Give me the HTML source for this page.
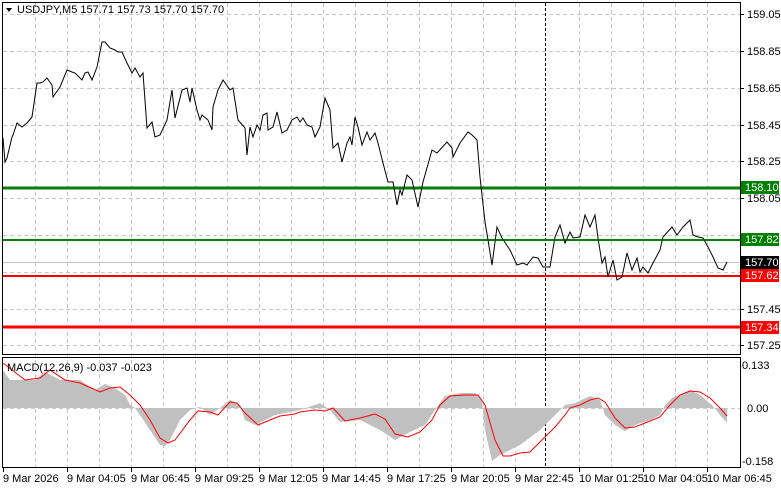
<!DOCTYPE html>
<html><head><style>
body{margin:0;width:781px;height:489px;background:#fff;overflow:hidden;font-family:"Liberation Sans",sans-serif;}
svg text{font-family:"Liberation Sans",sans-serif;font-size:11px;}
</style></head><body>
<svg width="781" height="489" xmlns="http://www.w3.org/2000/svg">
<g stroke="#c8c8c8" stroke-dasharray="4,3" stroke-width="1">
<line x1="35.5" y1="3" x2="35.5" y2="467"/><line x1="67.5" y1="3" x2="67.5" y2="467"/><line x1="99.5" y1="3" x2="99.5" y2="467"/><line x1="131.5" y1="3" x2="131.5" y2="467"/><line x1="163.5" y1="3" x2="163.5" y2="467"/><line x1="195.5" y1="3" x2="195.5" y2="467"/><line x1="227.5" y1="3" x2="227.5" y2="467"/><line x1="259.5" y1="3" x2="259.5" y2="467"/><line x1="291.5" y1="3" x2="291.5" y2="467"/><line x1="323.5" y1="3" x2="323.5" y2="467"/><line x1="355.5" y1="3" x2="355.5" y2="467"/><line x1="387.5" y1="3" x2="387.5" y2="467"/><line x1="419.5" y1="3" x2="419.5" y2="467"/><line x1="451.5" y1="3" x2="451.5" y2="467"/><line x1="483.5" y1="3" x2="483.5" y2="467"/><line x1="515.5" y1="3" x2="515.5" y2="467"/><line x1="579.5" y1="3" x2="579.5" y2="467"/><line x1="611.5" y1="3" x2="611.5" y2="467"/><line x1="643.5" y1="3" x2="643.5" y2="467"/><line x1="675.5" y1="3" x2="675.5" y2="467"/><line x1="707.5" y1="3" x2="707.5" y2="467"/>
<line x1="3" y1="14.5" x2="740" y2="14.5"/><line x1="3" y1="51.5" x2="740" y2="51.5"/><line x1="3" y1="88.5" x2="740" y2="88.5"/><line x1="3" y1="125.5" x2="740" y2="125.5"/><line x1="3" y1="161.5" x2="740" y2="161.5"/><line x1="3" y1="198.5" x2="740" y2="198.5"/><line x1="3" y1="235.5" x2="740" y2="235.5"/><line x1="3" y1="272.5" x2="740" y2="272.5"/><line x1="3" y1="309.5" x2="740" y2="309.5"/><line x1="3" y1="345.5" x2="740" y2="345.5"/>
<line x1="3" y1="408.5" x2="740" y2="408.5"/>
</g>
<line x1="545.5" y1="3" x2="545.5" y2="467" stroke="#000" stroke-dasharray="3,2"/>
<line x1="3" y1="188" x2="740" y2="188" stroke="#008000" stroke-width="3"/>
<line x1="3" y1="240" x2="740" y2="240" stroke="#008000" stroke-width="2"/>
<line x1="3" y1="262.5" x2="740" y2="262.5" stroke="#c0c0c0" stroke-width="1"/>
<line x1="3" y1="276" x2="740" y2="276" stroke="#ff0000" stroke-width="2"/>
<line x1="3" y1="327" x2="740" y2="327" stroke="#ff0000" stroke-width="3"/>
<polyline fill="none" stroke="#000" stroke-width="1" points="3,138 5,162 7,158 12,137 13,135 17,123 22,127 27,123 32,117 37,83 40,83 43,82 47,78 52,85 53,97 60,87 67,70 72,72 75,73 82,80 85,73 88,72 92,80 97,67 102,42 105,42 110,48 115,50 118,52 122,52 127,63 132,73 135,68 140,77 143,73 147,128 152,122 155,137 160,135 167,120 172,90 175,118 182,90 187,88 190,102 192,88 197,110 200,120 202,115 208,120 212,130 213,107 218,90 223,80 230,90 233,88 238,120 245,128 247,155 250,127 253,137 257,125 260,130 263,115 267,113 268,130 273,127 277,112 282,133 287,130 292,120 297,117 300,122 303,118 307,125 312,127 315,137 320,127 325,98 330,110 333,148 338,143 342,162 347,143 350,137 352,145 355,117 358,127 362,145 367,132 370,140 375,133 378,143 383,163 388,182 393,182 397,205 400,190 402,195 407,175 412,180 418,207 423,182 432,150 437,153 447,142 452,148 453,157 460,143 468,132 472,135 477,140 480,177 485,222 488,240 492,265 497,227 502,238 510,250 517,265 523,263 527,265 533,257 538,258 543,267 550,267 555,237 560,225 565,243 570,232 573,238 580,237 585,215 590,227 595,215 598,238 602,263 605,257 608,277 613,260 617,280 622,277 627,253 632,270 637,258 640,272 643,267 648,273 653,263 660,250 663,237 672,227 677,235 683,227 690,220 693,235 698,237 703,238 708,247 713,257 718,268 723,270 727,262"/>
<polygon fill="#c0c0c0" points="3,408 3,370 10,380 35,380 45,372 60,380 80,380 95,390 105,384 115,388 125,395 130,405 135,408 140,415 150,430 160,445 165,446 170,440 175,430 180,420 190,410 195,408 200,407 210,415 220,408 230,400 240,405 245,420 255,425 265,420 275,415 290,412 300,410 320,403 330,410 340,422 360,420 380,430 395,440 410,432 425,425 435,410 445,396 460,393 475,393 482,400 485,430 492,461 500,455 520,445 540,430 550,420 560,410 565,405 575,403 590,396 600,400 605,415 615,425 625,431 635,425 650,420 660,415 665,405 672,398 690,390 700,395 712,405 720,415 727,423 727,408"/>
<polyline fill="none" stroke="#ff0000" stroke-width="1" points="3,363 25,380 40,378 50,370 65,380 80,383 100,392 110,388 120,387 130,395 140,405 150,420 160,438 168,443 175,440 190,420 198,411 210,412 218,415 230,402 237,403 245,413 258,425 270,420 280,416 295,414 300,412 315,410 325,411 333,408 345,421 360,418 375,414 385,419 395,434 408,437 420,432 432,420 440,405 450,396 465,395 478,395 485,405 495,440 503,456 510,456 520,453 530,452 540,442 555,427 565,415 570,408 580,405 590,400 598,398 605,402 615,418 625,428 635,427 645,423 655,419 660,417 670,405 680,395 690,391 700,392 710,398 720,408 727,416"/>
<g fill="none" stroke="#000" stroke-width="1">
<rect x="2.5" y="2.5" width="738" height="352"/>
<rect x="2.5" y="357.5" width="738" height="110"/>
</g>
<g stroke="#000"><line x1="740" y1="14.5" x2="744" y2="14.5"/><line x1="740" y1="51.5" x2="744" y2="51.5"/><line x1="740" y1="88.5" x2="744" y2="88.5"/><line x1="740" y1="125.5" x2="744" y2="125.5"/><line x1="740" y1="161.5" x2="744" y2="161.5"/><line x1="740" y1="198.5" x2="744" y2="198.5"/><line x1="740" y1="309.5" x2="744" y2="309.5"/><line x1="740" y1="345.5" x2="744" y2="345.5"/></g>
<g fill="#000">
<text x="747" y="18">159.05</text><text x="747" y="55">158.85</text><text x="747" y="92">158.65</text><text x="747" y="129">158.45</text><text x="747" y="165">158.25</text><text x="747" y="202">158.05</text><text x="747" y="313">157.45</text><text x="747" y="349">157.25</text>
<text x="742" y="369">0.133</text><text x="747" y="412">0.00</text><text x="742" y="465">-0.158</text>
</g>
<rect x="741" y="181" width="38" height="13" fill="#008000"/><text x="745" y="191" fill="#fff">158.10</text>
<rect x="741" y="233" width="38" height="13" fill="#008000"/><text x="745" y="243" fill="#fff">157.82</text>
<rect x="741" y="256" width="38" height="13" fill="#000"/><text x="745" y="266" fill="#fff">157.70</text>
<rect x="741" y="269" width="38" height="13" fill="#ff0000"/><text x="745" y="279" fill="#fff">157.62</text>
<rect x="741" y="321" width="38" height="13" fill="#ff0000"/><text x="745" y="331" fill="#fff">157.34</text>
<path d="M6,8 L12,8 L9,12 Z" fill="#000"/>
<text x="17" y="13" fill="#000">USDJPY,M5  157.71 157.73 157.70 157.70</text>
<text x="7" y="371" fill="#000">MACD(12,26,9) -0.037 -0.023</text>
<g stroke="#000"><line x1="3.5" y1="468" x2="3.5" y2="472"/><line x1="67.5" y1="468" x2="67.5" y2="472"/><line x1="131.5" y1="468" x2="131.5" y2="472"/><line x1="195.5" y1="468" x2="195.5" y2="472"/><line x1="259.5" y1="468" x2="259.5" y2="472"/><line x1="323.5" y1="468" x2="323.5" y2="472"/><line x1="387.5" y1="468" x2="387.5" y2="472"/><line x1="451.5" y1="468" x2="451.5" y2="472"/><line x1="515.5" y1="468" x2="515.5" y2="472"/><line x1="579.5" y1="468" x2="579.5" y2="472"/><line x1="643.5" y1="468" x2="643.5" y2="472"/><line x1="707.5" y1="468" x2="707.5" y2="472"/></g>
<g fill="#000">
<text x="3" y="482">9 Mar 2026</text><text x="67" y="482">9 Mar 04:05</text><text x="131" y="482">9 Mar 06:45</text><text x="195" y="482">9 Mar 09:25</text><text x="259" y="482">9 Mar 12:05</text><text x="322" y="482">9 Mar 14:45</text><text x="387" y="482">9 Mar 17:25</text><text x="451" y="482">9 Mar 20:05</text><text x="515" y="482">9 Mar 22:45</text><text x="579" y="482">10 Mar 01:25</text><text x="643" y="482">10 Mar 04:05</text><text x="707" y="482">10 Mar 06:45</text>
</g>
</svg>
</body></html>
